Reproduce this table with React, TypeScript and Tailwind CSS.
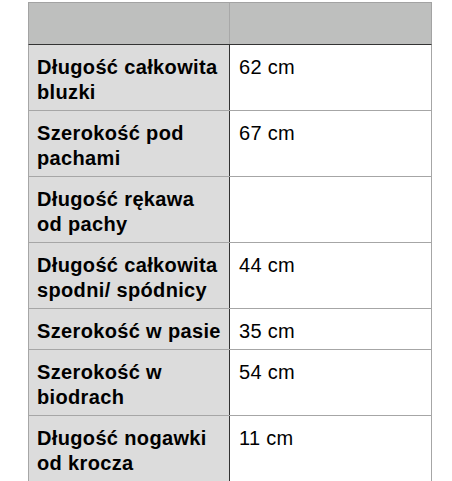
import React from "react";

const rows: { label: string[]; value: string }[] = [
  { label: ["Długość całkowita", "bluzki"], value: "62 cm" },
  { label: ["Szerokość pod", "pachami"], value: "67 cm" },
  { label: ["Długość rękawa", "od pachy"], value: "" },
  { label: ["Długość całkowita", "spodni/ spódnicy"], value: "44 cm" },
  { label: ["Szerokość w pasie"], value: "35 cm" },
  { label: ["Szerokość w", "biodrach"], value: "54 cm" },
  { label: ["Długość nogawki", "od krocza"], value: "11 cm" },
];

export default function App() {
  return (
    <div
      className="w-[452px] h-[481px] overflow-hidden bg-white pt-[2px] pl-[28px]"
      style={{ fontFamily: '"Liberation Sans", Arial, sans-serif' }}
    >
      <div className="w-[404px] text-black">
        <div className="flex h-[43px] border-t border-l border-r border-[#a3a3a3] border-b border-b-[#333333] bg-[#bebfbe]">
          <div className="w-[201px] border-r border-[#a8a8a8]" />
          <div className="flex-1" />
        </div>
        {rows.map((r, i) => (
          <div
            key={i}
            className="flex border-l border-r border-b border-[#a6a6a6]"
          >
            <div className="w-[201px] shrink-0 bg-[#dcdcdc] border-r border-[#333333] pl-[8px] pt-[10px] pb-[5px] text-[20px] leading-[25px] font-bold tracking-[0.35px]">
              {r.label.map((l, j) => (
                <div key={j} className="whitespace-nowrap">{l}</div>
              ))}
            </div>
            <div className="flex-1 pl-[9px] pt-[10px] pb-[5px] text-[20px] leading-[25px] tracking-[0.3px]">
              {r.value}
            </div>
          </div>
        ))}
      </div>
    </div>
  );
}
